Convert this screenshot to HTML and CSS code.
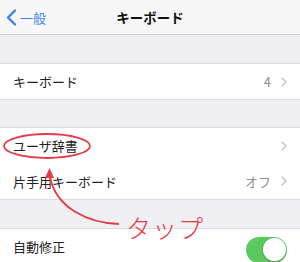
FILE: index.html
```html
<!DOCTYPE html>
<html lang="ja">

<head>
    <meta charset="UTF-8">
    <meta name="viewport" content="width=device-width, initial-scale=1.0">
    <title>キーボード</title>
    <link rel="stylesheet" href="styles.css">
</head>

<body>
    <div class="screen">
        <nav class="navbar">
            <a class="back" href="#">
                <svg class="back-icon" width="11" height="17" viewBox="0 0 11 17">
                    <path d="M9 1.5 L2 8.5 L9 15.5" fill="none" stroke="#3b82f0" stroke-width="2.4" stroke-linecap="round" stroke-linejoin="round"/>
                </svg>
                <span>一般</span>
            </a>
            <h1 class="title">キーボード</h1>
        </nav>

        <div class="spacer"></div>

        <div class="group">
            <div class="row">
                <span class="label">キーボード</span>
                <span class="value">4</span>
                <svg class="chevron" width="6" height="10" viewBox="0 0 6 10">
                    <path d="M1 1 L5 5 L1 9" fill="none" stroke="#c4c4c8" stroke-width="1.4" stroke-linecap="round" stroke-linejoin="round"/>
                </svg>
            </div>
        </div>

        <div class="spacer short"></div>

        <div class="group">
            <div class="row">
                <span class="label">ユーザ辞書</span>
                <svg class="chevron" width="6" height="10" viewBox="0 0 6 10">
                    <path d="M1 1 L5 5 L1 9" fill="none" stroke="#c4c4c8" stroke-width="1.4" stroke-linecap="round" stroke-linejoin="round"/>
                </svg>
            </div>
            <div class="row">
                <span class="label">片手用キーボード</span>
                <span class="value">オフ</span>
                <svg class="chevron" width="6" height="10" viewBox="0 0 6 10">
                    <path d="M1 1 L5 5 L1 9" fill="none" stroke="#c4c4c8" stroke-width="1.4" stroke-linecap="round" stroke-linejoin="round"/>
                </svg>
            </div>
        </div>

        <div class="spacer"></div>

        <div class="group">
            <div class="row">
                <span class="label">自動修正</span>
                <span class="switch on"><span class="knob"></span></span>
            </div>
        </div>

        <!-- 注釈 -->
        <svg class="marks" width="300" height="262" viewBox="0 0 300 262">
            <ellipse cx="47" cy="146" rx="43" ry="12" fill="none" stroke="#e63b46" stroke-width="1.8"/>
            <path d="M119 224 C 88 223 56 208 50 177" fill="none" stroke="#e63b46" stroke-width="1.8"/>
            <polygon points="49.5,168 45,178 54,178" fill="#e63b46"/>
        </svg>
        <span class="tap">タップ</span>
    </div>
</body>

</html>
```

FILE: styles.css
```css
body {
    margin: 0;
    padding: 0;
    font-family: "Noto Sans CJK JP", "Noto Sans", sans-serif;
    background: #efeff4;
}

.screen {
    position: relative;
    width: 300px;
    height: 262px;
    overflow: hidden;
    background: #efeff4;
}

.navbar {
    position: relative;
    height: 34px;
    display: flex;
    align-items: center;
    justify-content: center;
    background: #f7f7f8;
    border-bottom: 1px solid #cfcfd3;
}

.back {
    position: absolute;
    left: 6px;
    top: 9px;
    display: flex;
    align-items: center;
    gap: 3px;
    color: #3b82f0;
    text-decoration: none;
    font-size: 13px;
    line-height: 17px;
}

.title {
    margin: 0;
    font-size: 13.5px;
    font-weight: bold;
    color: #111;
}

.spacer {
    height: 28px;
}

.spacer.short {
    height: 27px;
}

.group {
    background: #fff;
    border-top: 1px solid #dcdce0;
    border-bottom: 1px solid #dcdce0;
}

.row {
    height: 35px;
    display: flex;
    align-items: center;
    padding: 0 13px 0 13px;
    font-size: 13px;
    color: #222;
}

.row + .row {
    box-shadow: inset 12px 1px 0 #fff, inset 0 1px 0 #dcdce0;
    height: 36px;
}

.label {
    flex: 1;
}

.value {
    color: #8e8e93;
    margin-right: 10px;
}

.chevron {
    display: block;
}

.switch {
    width: 41px;
    height: 26px;
    border-radius: 13px;
    background: #5cc860;
    position: relative;
    margin-top: 6px;
}

.switch .knob {
    position: absolute;
    right: 1.5px;
    top: 1.5px;
    width: 23px;
    height: 23px;
    border-radius: 50%;
    background: #fff;
    box-shadow: 0 1px 2px rgba(0, 0, 0, 0.25);
}

.marks {
    position: absolute;
    left: 0;
    top: 0;
    pointer-events: none;
}

.tap {
    position: absolute;
    left: 126px;
    top: 212px;
    font-size: 25px;
    font-weight: 300;
    line-height: 1.2;
    color: #e63b46;
    letter-spacing: 1px;
}
```
